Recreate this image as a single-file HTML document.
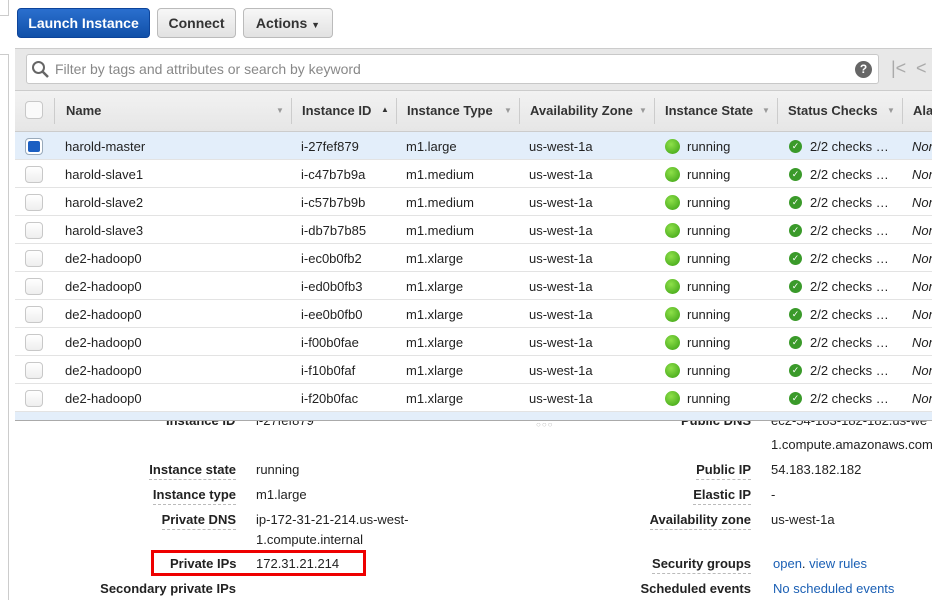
<!DOCTYPE html>
<html><head><style>
*{margin:0;padding:0;box-sizing:border-box}
body{width:932px;height:600px;overflow:hidden;background:#fff;font-family:"Liberation Sans",Arial,sans-serif;font-size:13px;color:#222;position:relative}
.a{position:absolute;white-space:nowrap}
.btn{position:absolute;top:8px;height:30px;border-radius:4px;font-weight:bold;font-size:14px;line-height:28px;text-align:center;border:1px solid #bbb;background:linear-gradient(#f7f7f7,#e2e2e2);color:#333}
.hd{position:absolute;top:90px;height:42px;font-weight:bold;line-height:42px;color:#333}
.row{position:absolute;left:15px;width:917px;height:28px;border-bottom:1px solid #e3e3e3;background:#fff}
.cb{position:absolute;left:10px;top:6px;width:18px;height:17px;border:1px solid #c8c8c8;border-radius:4px;background:linear-gradient(#fff,#eee)}
.dot{position:absolute;left:650px;top:7px;width:15px;height:15px;border-radius:50%;background:radial-gradient(circle at 40% 35%,#8ee04a,#3aa012)}
.ck{position:absolute;left:774px;top:8px;width:13px;height:13px;border-radius:50%;background:#3a9a2a;color:#fff;font-size:9px;line-height:13px;text-align:center}
.row span{position:absolute;top:7px}
.lb{position:absolute;font-weight:bold;text-align:right;border-bottom:1px dashed #bbb;padding-bottom:2px}
</style></head><body>
<div class="a" style="left:0;top:0;width:9px;height:16px;border-right:1px solid #ccc;border-bottom:1px solid #ccc"></div>
<div class="a" style="left:0;top:54px;width:9px;height:546px;border-right:1px solid #ccc;border-top:1px solid #ccc"></div>
<div class="btn" style="left:17px;width:133px;background:linear-gradient(#2a6fce,#1150a8);border-color:#0d449a;color:#fff">Launch Instance</div>
<div class="btn" style="left:157px;width:79px">Connect</div>
<div class="btn" style="left:243px;width:90px">Actions <span style="font-size:9px">&#9660;</span></div>
<div class="a" style="left:15px;top:48px;width:917px;height:42px;background:#e8e8e8;border-top:1px solid #ccc"></div>
<div class="a" style="left:26px;top:54px;width:853px;height:30px;background:#fff;border:1px solid #c8c8c8;border-radius:3px"></div>
<svg class="a" style="left:31px;top:60px" width="19" height="19"><circle cx="7.5" cy="7.5" r="5.5" fill="none" stroke="#666" stroke-width="2"/><line x1="11.5" y1="11.5" x2="17" y2="17" stroke="#666" stroke-width="2.5"/></svg>
<div class="a" style="left:55px;top:61px;font-size:14px;color:#888">Filter by tags and attributes or search by keyword</div>
<div class="a" style="left:855px;top:61px;width:17px;height:17px;border-radius:50%;background:#666;color:#fff;font-weight:bold;font-size:12px;text-align:center;line-height:17px">?</div>
<div class="a" style="left:891px;top:58px;font-size:18px;color:#aaa">|&lt;</div>
<div class="a" style="left:916px;top:58px;font-size:18px;color:#aaa">&lt;</div>
<div class="a" style="left:15px;top:90px;width:917px;height:42px;background:linear-gradient(#f2f2f2,#e6e6e6);border-top:1px solid #ccc;border-bottom:1px solid #ccc"></div>
<div class="a" style="left:25px;top:101px;width:18px;height:18px;border:1px solid #c8c8c8;border-radius:4px;background:#fafafa"></div>
<div class="a" style="left:54px;top:98px;height:26px;border-left:1px solid #ccc"></div>
<div class="hd" style="left:66px">Name</div><div class="a" style="left:276px;top:106px;font-size:8px;color:#999">&#9660;</div>
<div class="a" style="left:291px;top:98px;height:26px;border-left:1px solid #ccc"></div>
<div class="hd" style="left:302px">Instance ID</div><div class="a" style="left:381px;top:105px;font-size:8px;color:#333">&#9650;</div>
<div class="a" style="left:396px;top:98px;height:26px;border-left:1px solid #ccc"></div>
<div class="hd" style="left:407px">Instance Type</div><div class="a" style="left:504px;top:106px;font-size:8px;color:#999">&#9660;</div>
<div class="a" style="left:519px;top:98px;height:26px;border-left:1px solid #ccc"></div>
<div class="hd" style="left:530px">Availability Zone</div><div class="a" style="left:639px;top:106px;font-size:8px;color:#999">&#9660;</div>
<div class="a" style="left:654px;top:98px;height:26px;border-left:1px solid #ccc"></div>
<div class="hd" style="left:665px">Instance State</div><div class="a" style="left:762px;top:106px;font-size:8px;color:#999">&#9660;</div>
<div class="a" style="left:777px;top:98px;height:26px;border-left:1px solid #ccc"></div>
<div class="hd" style="left:788px">Status Checks</div><div class="a" style="left:887px;top:106px;font-size:8px;color:#999">&#9660;</div>
<div class="a" style="left:902px;top:98px;height:26px;border-left:1px solid #ccc"></div>
<div class="hd" style="left:913px">Ala</div>

<div class="row" style="top:132px;background:#e3eefa"><div class="cb" style="background:#fff;border-color:#9ab"><div style="margin:2px;width:12px;height:11px;background:#1b5fc2;border-radius:2px"></div></div><span style="left:50px">harold-master</span><span style="left:286px">i-27fef879</span><span style="left:391px">m1.large</span><span style="left:514px">us-west-1a</span><div class="dot"></div><span style="left:672px">running</span><div class="ck">✓</div><span style="left:795px">2/2 checks …</span><span style="left:897px;font-style:italic">Nor</span></div>
<div class="row" style="top:160px"><div class="cb"></div><span style="left:50px">harold-slave1</span><span style="left:286px">i-c47b7b9a</span><span style="left:391px">m1.medium</span><span style="left:514px">us-west-1a</span><div class="dot"></div><span style="left:672px">running</span><div class="ck">✓</div><span style="left:795px">2/2 checks …</span><span style="left:897px;font-style:italic">Nor</span></div>
<div class="row" style="top:188px"><div class="cb"></div><span style="left:50px">harold-slave2</span><span style="left:286px">i-c57b7b9b</span><span style="left:391px">m1.medium</span><span style="left:514px">us-west-1a</span><div class="dot"></div><span style="left:672px">running</span><div class="ck">✓</div><span style="left:795px">2/2 checks …</span><span style="left:897px;font-style:italic">Nor</span></div>
<div class="row" style="top:216px"><div class="cb"></div><span style="left:50px">harold-slave3</span><span style="left:286px">i-db7b7b85</span><span style="left:391px">m1.medium</span><span style="left:514px">us-west-1a</span><div class="dot"></div><span style="left:672px">running</span><div class="ck">✓</div><span style="left:795px">2/2 checks …</span><span style="left:897px;font-style:italic">Nor</span></div>
<div class="row" style="top:244px"><div class="cb"></div><span style="left:50px">de2-hadoop0</span><span style="left:286px">i-ec0b0fb2</span><span style="left:391px">m1.xlarge</span><span style="left:514px">us-west-1a</span><div class="dot"></div><span style="left:672px">running</span><div class="ck">✓</div><span style="left:795px">2/2 checks …</span><span style="left:897px;font-style:italic">Nor</span></div>
<div class="row" style="top:272px"><div class="cb"></div><span style="left:50px">de2-hadoop0</span><span style="left:286px">i-ed0b0fb3</span><span style="left:391px">m1.xlarge</span><span style="left:514px">us-west-1a</span><div class="dot"></div><span style="left:672px">running</span><div class="ck">✓</div><span style="left:795px">2/2 checks …</span><span style="left:897px;font-style:italic">Nor</span></div>
<div class="row" style="top:300px"><div class="cb"></div><span style="left:50px">de2-hadoop0</span><span style="left:286px">i-ee0b0fb0</span><span style="left:391px">m1.xlarge</span><span style="left:514px">us-west-1a</span><div class="dot"></div><span style="left:672px">running</span><div class="ck">✓</div><span style="left:795px">2/2 checks …</span><span style="left:897px;font-style:italic">Nor</span></div>
<div class="row" style="top:328px"><div class="cb"></div><span style="left:50px">de2-hadoop0</span><span style="left:286px">i-f00b0fae</span><span style="left:391px">m1.xlarge</span><span style="left:514px">us-west-1a</span><div class="dot"></div><span style="left:672px">running</span><div class="ck">✓</div><span style="left:795px">2/2 checks …</span><span style="left:897px;font-style:italic">Nor</span></div>
<div class="row" style="top:356px"><div class="cb"></div><span style="left:50px">de2-hadoop0</span><span style="left:286px">i-f10b0faf</span><span style="left:391px">m1.xlarge</span><span style="left:514px">us-west-1a</span><div class="dot"></div><span style="left:672px">running</span><div class="ck">✓</div><span style="left:795px">2/2 checks …</span><span style="left:897px;font-style:italic">Nor</span></div>
<div class="row" style="top:384px"><div class="cb"></div><span style="left:50px">de2-hadoop0</span><span style="left:286px">i-f20b0fac</span><span style="left:391px">m1.xlarge</span><span style="left:514px">us-west-1a</span><div class="dot"></div><span style="left:672px">running</span><div class="ck">✓</div><span style="left:795px">2/2 checks …</span><span style="left:897px;font-style:italic">Nor</span></div>
<div class="a" style="left:15px;top:412px;width:917px;height:9px;background:#e3eefa;border-bottom:1px solid #aaa"></div>
<div class="a" style="left:15px;top:421px;width:917px;height:12px;overflow:hidden">
 <div class="a" style="left:151px;top:-8px;font-weight:bold">Instance ID</div>
 <div class="a" style="left:241px;top:-8px">i-27fef879</div>
 <div class="a" style="left:666px;top:-8px;font-weight:bold">Public DNS</div>
 <div class="a" style="left:756px;top:-8px">ec2-54-183-182-182.us-we</div>
</div>
<div class="a" style="left:536px;top:420px;font-size:8px;color:#bbb;letter-spacing:1px">○○○</div>
<div class="a" style="left:771px;top:437px">1.compute.amazonaws.com</div>

<div class="lb" style="right:696px;top:462px">Instance state</div><div class="a" style="left:256px;top:462px">running</div>
<div class="lb" style="right:696px;top:487px">Instance type</div><div class="a" style="left:256px;top:487px">m1.large</div>
<div class="lb" style="right:696px;top:512px">Private DNS</div><div class="a" style="left:256px;top:512px">ip-172-31-21-214.us-west-</div>
<div class="a" style="left:256px;top:532px">1.compute.internal</div>
<div class="a" style="left:170px;top:556px;font-weight:bold">Private IPs</div><div class="a" style="left:256px;top:556px">172.31.21.214</div>
<div class="a" style="left:151px;top:550px;width:215px;height:26px;border:3px solid #e00"></div>
<div class="a" style="right:696px;top:581px;font-weight:bold">Secondary private IPs</div>

<div class="lb" style="right:181px;top:462px">Public IP</div><div class="a" style="left:771px;top:462px">54.183.182.182</div>
<div class="lb" style="right:181px;top:487px">Elastic IP</div><div class="a" style="left:771px;top:487px">-</div>
<div class="lb" style="right:181px;top:512px">Availability zone</div><div class="a" style="left:771px;top:512px">us-west-1a</div>
<div class="lb" style="right:181px;top:556px">Security groups</div><div class="a" style="left:773px;top:556px;color:#1a5fb4">open<span style="color:#222">.</span> view rules</div>
<div class="a" style="right:181px;top:581px;font-weight:bold">Scheduled events</div><div class="a" style="left:773px;top:581px;color:#1a5fb4">No scheduled events</div>
</body></html>
